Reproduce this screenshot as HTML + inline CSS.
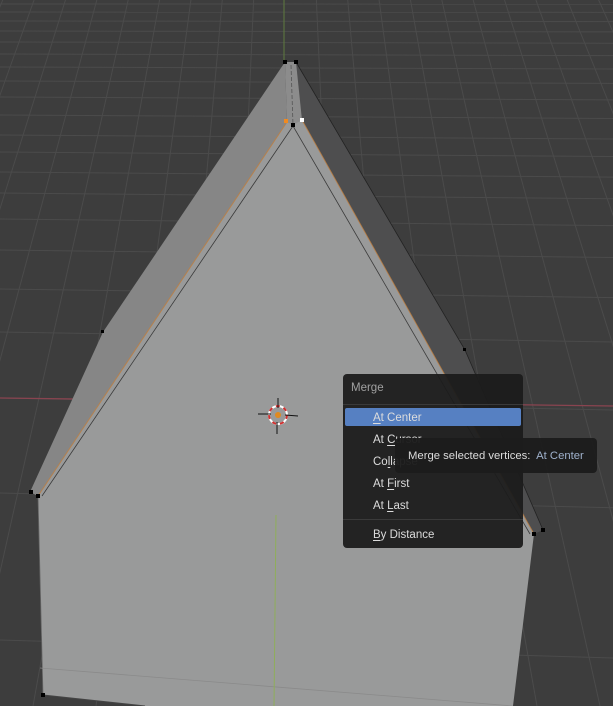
<!DOCTYPE html>
<html><head><meta charset="utf-8"><style>
html,body{margin:0;padding:0;width:613px;height:706px;overflow:hidden;background:#3d3d3d;font-family:"Liberation Sans","DejaVu Sans",sans-serif;position:relative}
#v{position:absolute;left:0;top:0;overflow:hidden;display:block}
.menu{position:absolute;left:343px;top:374px;width:180px;height:174px;background:rgba(28,28,28,0.94);border-radius:4px;color:#dcdcdc;font-size:11.5px}
.menu .h{position:absolute;left:8px;top:8px;color:#a0a0a0}
.sep{position:absolute;left:0;right:0;height:1px;background:#3a3a3a}
.it{position:absolute;left:30px;height:18px;line-height:20px}
.hl{position:absolute;left:2px;width:176px;top:34px;height:18px;background:#5680c2;border-radius:2px}
.tip{position:absolute;left:395px;top:438px;width:202px;height:35px;background:rgba(28,28,28,0.96);border-radius:4px;color:#dcdcdc;font-size:11.3px;line-height:37px;box-sizing:border-box;padding-left:13px;white-space:nowrap;overflow:hidden}
.tip span{color:#9fb1cc}
u{text-decoration:underline;text-underline-offset:2px}
</style></head><body>
<svg id="v" width="613" height="706" viewBox="0 0 613 706">
<g id="grid" stroke="#4b4b4b" stroke-width="1" fill="none"></g>
<line x1="0" y1="398" x2="613" y2="406" stroke="#8a4450" stroke-width="1.3"/>
<line x1="284" y1="0" x2="284" y2="62" stroke="#5e7a3e" stroke-width="1"/>
<polygon points="285,62 103,332 30,492 38,496 287,122" fill="#868686"/>
<polygon points="296,62 465,350 543,530 534,534 302,120" fill="#4e4e4f"/>
<polygon points="285,62 296,62 302,120 293,126 287,122" fill="#8c8c8c"/>
<polygon points="293,125 302,120 534,534 513,706 145,706 43,695 38,496 287,122" fill="#999a9a"/>
<polyline points="287,122 38,496" stroke="#c08040" stroke-width="1" fill="none" opacity="0.8"/>
<polyline points="302,120 534,534" stroke="#c08040" stroke-width="1" fill="none" opacity="0.8"/>
<polyline points="293,126 42,496" stroke="#3a3a3a" stroke-width="0.8" fill="none"/>
<polyline points="293,126 530,534" stroke="#3a3a3a" stroke-width="0.8" fill="none"/>
<polyline points="296,62 465,350 543,530" stroke="#222" stroke-width="0.8" fill="none"/>
<line x1="38" y1="496" x2="43" y2="695" stroke="#666" stroke-width="0.8"/>
<line x1="43" y1="695" x2="145" y2="706" stroke="#444" stroke-width="1"/>
<line x1="40" y1="668" x2="513" y2="706" stroke="#8a8a8a" stroke-width="0.8"/>
<line x1="276" y1="515" x2="274" y2="706" stroke="#8fae5a" stroke-width="1"/>
<line x1="291" y1="65" x2="293" y2="125" stroke="#555" stroke-width="0.8" stroke-dasharray="4 2"/>
<g fill="#000">
<rect x="283" y="60" width="4" height="4"/><rect x="294" y="60" width="4" height="4"/>
<rect x="291" y="123" width="4" height="4"/><rect x="101" y="330" width="3" height="3"/>
<rect x="29" y="490" width="4" height="4"/><rect x="36" y="494" width="4" height="4"/>
<rect x="41" y="693" width="4" height="4"/><rect x="532" y="532" width="4" height="4"/>
<rect x="541" y="528" width="4" height="4"/><rect x="463" y="348" width="3" height="3"/>
</g>
<rect x="284" y="119" width="4" height="4" fill="#f08a20"/>
<rect x="300" y="118" width="4" height="4" fill="#fff"/>
<g>
<circle cx="278" cy="415" r="9" fill="none" stroke="#fff" stroke-width="2"/>
<circle cx="278" cy="415" r="9" fill="none" stroke="#d03030" stroke-width="2" stroke-dasharray="4 4"/>
<line x1="258" y1="414" x2="271" y2="414" stroke="#111"/><line x1="285" y1="415" x2="298" y2="416" stroke="#111"/>
<line x1="278" y1="398" x2="278" y2="408" stroke="#111"/><line x1="277" y1="422" x2="277" y2="434" stroke="#111"/>
<circle cx="278" cy="415" r="3" fill="#e08a20"/>
</g>
</svg>
<div class="menu">
<div class="h">Merge</div>
<div class="sep" style="top:30px"></div>
<div class="hl"></div>
<div class="it" style="top:34px"><u>A</u>t Center</div>
<div class="it" style="top:56px">At <u>C</u>ursor</div>
<div class="it" style="top:78px">Co<u>l</u>lapse</div>
<div class="it" style="top:100px">At <u>F</u>irst</div>
<div class="it" style="top:122px">At <u>L</u>ast</div>
<div class="sep" style="top:145px"></div>
<div class="it" style="top:151px"><u>B</u>y Distance</div>
</div>
<div class="tip">Merge selected vertices:&nbsp; <span>At Center</span></div>
<script>
var g=document.getElementById('grid'),s='';
var ys=[4,12,21,31,42,54,67,81,97,115,135,152,172,193,219,250,289,332,398,493,640];
ys.forEach(function(y){var t=Math.min(18,y*0.03);s+='<line x1="0" y1="'+y+'" x2="613" y2="'+(y+t)+'"/>';});
var vx=285,vy=-700;
for(var k=-20;k<=20;k++){if(k==0)continue;var bx=285+k*63;s+='<line x1="'+vx+'" y1="'+vy+'" x2="'+bx+'" y2="706"/>';}
g.innerHTML=s;
</script>
</body></html>
